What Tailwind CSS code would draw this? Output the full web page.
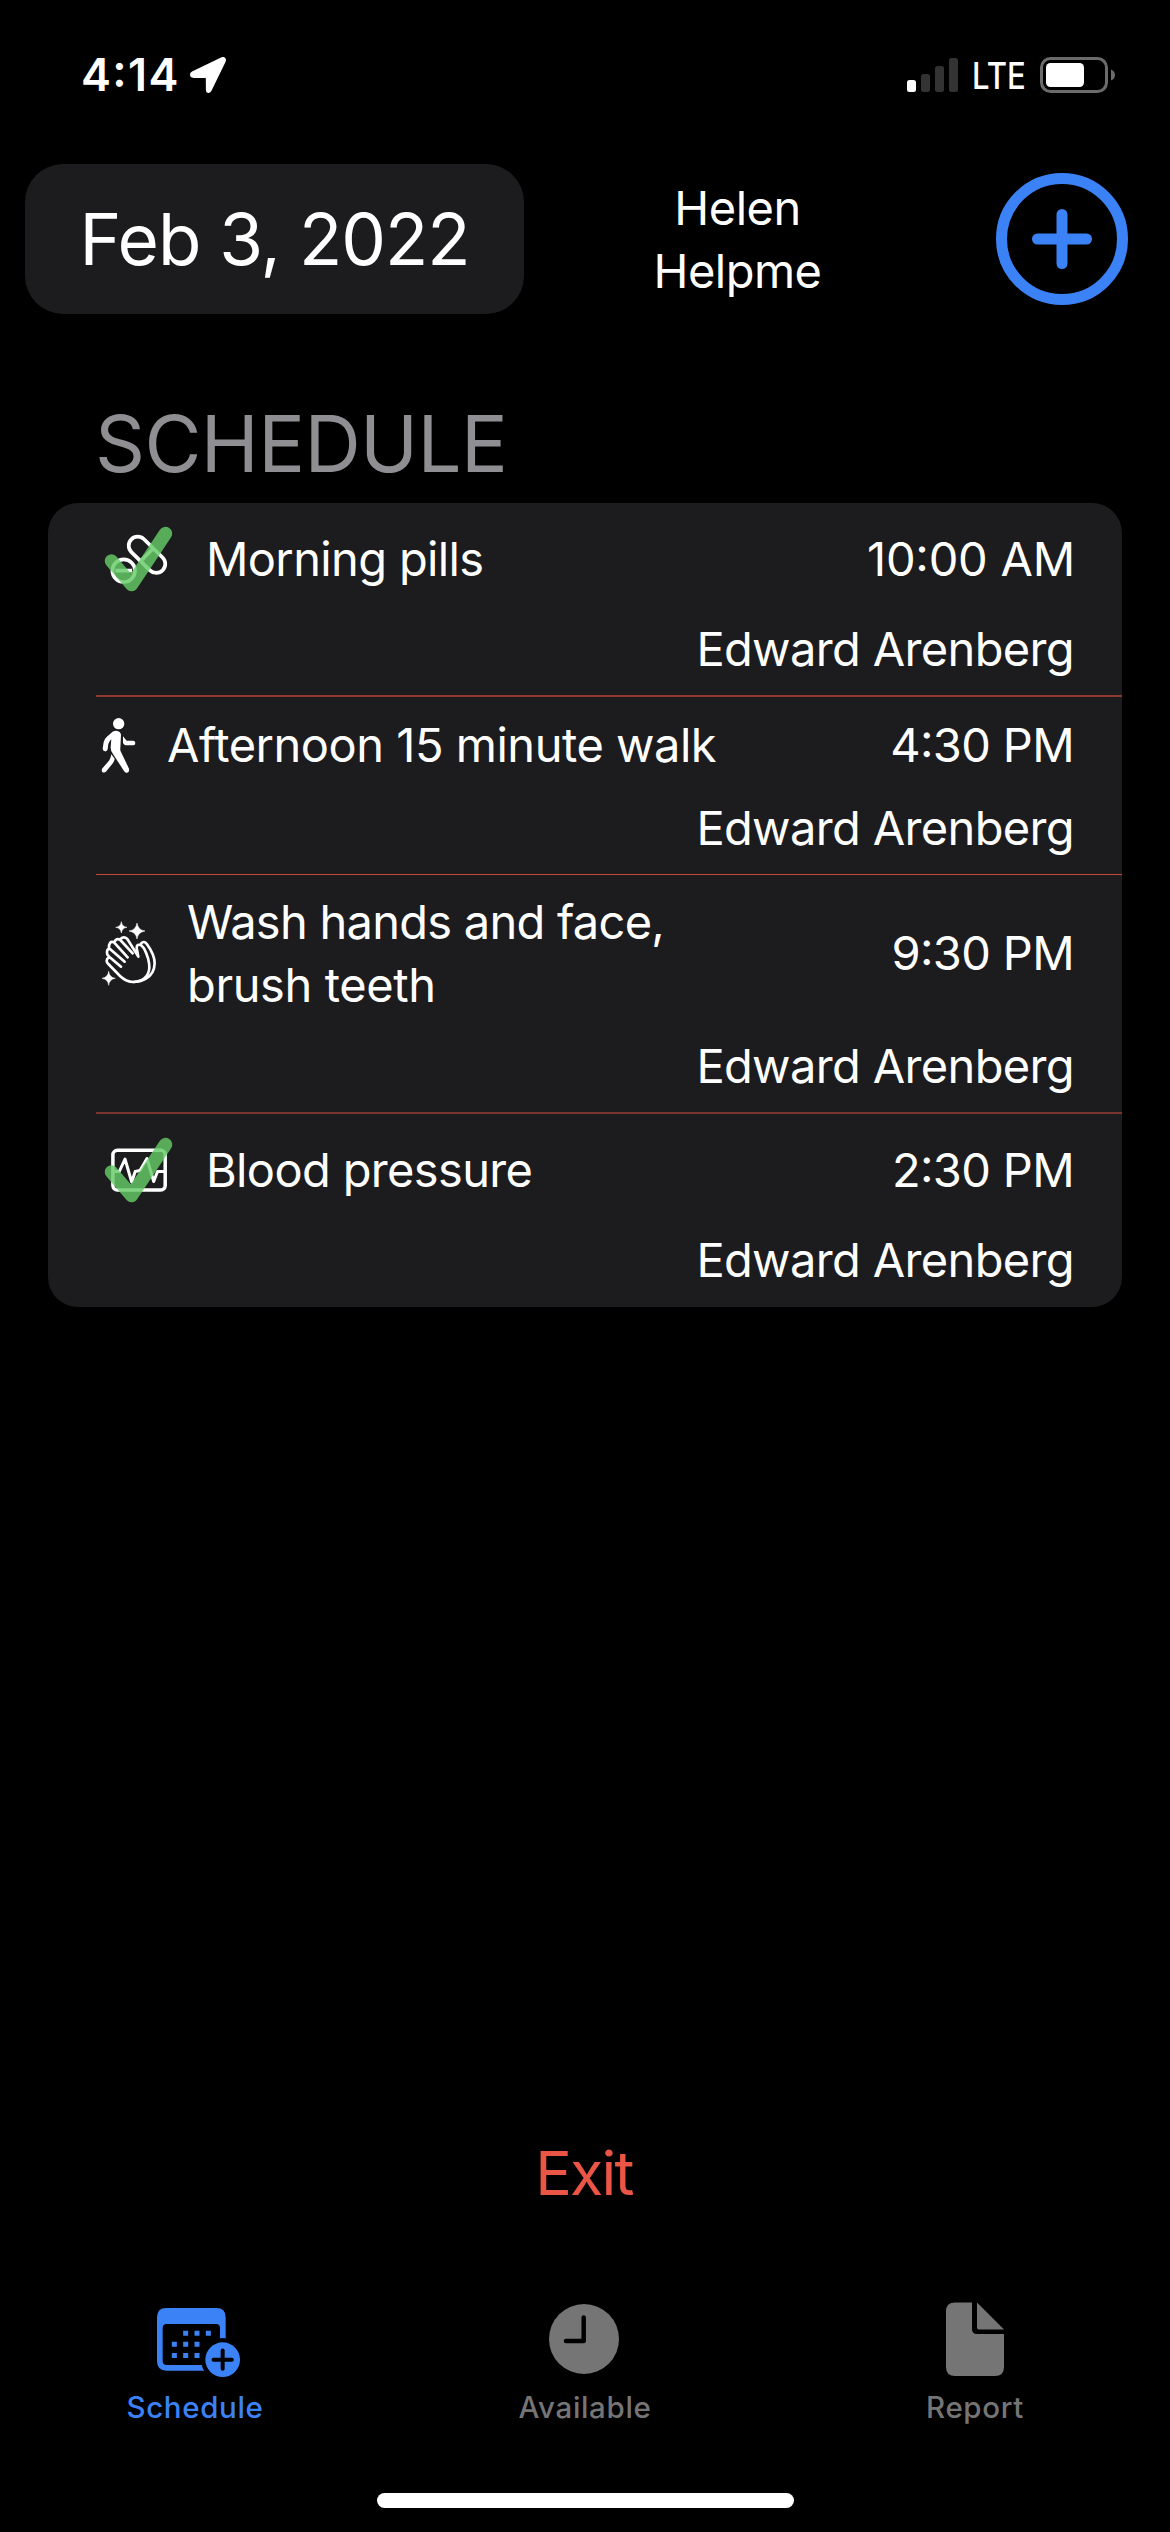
<!DOCTYPE html>
<html lang="en">
<head>
<meta charset="utf-8">
<title>Schedule</title>
<script src="https://cdn.jsdelivr.net/npm/@tailwindcss/browser@4"></script>
</head>
<body class="bg-black text-white font-['Inter',sans-serif] [font-feature-settings:'calt','case'_0]">
<div class="w-[1170px] h-[2532px] flex flex-col overflow-hidden bg-black">

  <!-- Status bar -->
  <div class="h-[149px] flex items-center justify-between pl-[81px] pr-[55px]">
    <div class="flex items-center">
      <span class="w-[109px] text-[45px] leading-none font-semibold tracking-[1.38px]">4:14</span>
      <svg class="w-[36px] h-[36px]" viewBox="0 0 36 36" fill="#fff"><path d="M31.6.3 2 14.400Q0 15.500 0 17.500 0 20.700 3.600 20.900L15.800 21 15.900 33Q16 36 18.500 36 20.600 36 21.600 33.600L35.600 4.800Q36.600 2 35 .7 33.600-.5 31.600.3Z"/></svg>
    </div>
    <div class="flex items-center">
      <svg class="w-[51px] h-[34px]" viewBox="0 0 51 34">
        <rect x="0" y="22" width="9" height="12" rx="2.500" fill="#fff"/>
        <rect x="14" y="16" width="9" height="18" rx="2.500" fill="#333"/>
        <rect x="28" y="8" width="9" height="26" rx="2.500" fill="#333"/>
        <rect x="42" y="0" width="9" height="34" rx="2.500" fill="#333"/>
      </svg>
      <span class="ml-[14px] w-[54px] mr-[14px] text-[37px] leading-[40px] font-medium whitespace-nowrap origin-left scale-x-[0.84] mt-[3px]">LTE</span>
      <svg class="w-[75px] h-[36px]" viewBox="0 0 75 36">
        <rect x="1.500" y="1.500" width="65" height="33" rx="9" fill="none" stroke="#6b6b6b" stroke-width="3"/>
        <rect x="6" y="6" width="38" height="24" rx="4.500" fill="#fff"/>
        <path d="M71 12.500Q75 14 75 18T71 23.500Z" fill="#6b6b6b"/>
      </svg>
    </div>
  </div>

  <!-- Header -->
  <div class="mt-[15px] h-[150px] flex items-center pl-[25px]">
    <button class="w-[499px] h-[150px] rounded-[38px] bg-[#1c1c1e] text-[71px] leading-none tracking-[-1.03px] whitespace-nowrap">Feb 3, 2022</button>
    <div class="w-[427px] text-center text-[47px] leading-[63px] tracking-[-0.5px]">Helen<br>Helpme</div>
    <svg class="ml-[45px] w-[132px] h-[132px]" viewBox="0 0 132 132" fill="none" stroke="#3c82f7" stroke-width="11" stroke-linecap="round">
      <circle cx="66" cy="66" r="60.500"/>
      <path d="M66 41.500V90.500M41.500 66H90.500" />
    </svg>
  </div>

  <h2 class="mt-[85px] ml-[95px] text-[78px] leading-[90px] tracking-[-0.62px] text-[#8e8e93]">SCHEDULE</h2>

  <!-- Schedule list -->
  <div class="mt-[14px] mx-[48px] h-[804px] pl-[48px] rounded-[30px] bg-[#1c1c1e] overflow-hidden text-[47px] leading-[62px] tracking-[-0.64px] whitespace-nowrap">

    <div class="h-[194px] pt-[25px] pr-[48px] border-b-2 border-[#8e382f] flex flex-col gap-[28px]">
      <div class="h-[62px] flex items-center">
        <svg class="w-[110px] h-[62px] overflow-visible" viewBox="96 528 110 62" fill="none">
          <g stroke="#fff" stroke-width="3.700">
            <rect x="-22" y="-9" width="44" height="18" rx="9" transform="translate(147 554.800) rotate(44.500)"/>
            <path d="M140.500 561.200 153.400 548.300"/>
            <circle cx="123.700" cy="570.700" r="11.300"/>
            <path d="M115.500 570.700H132"/>
          </g>
          <path d="M111.500 561 131.500 584.500 165.500 533.500" stroke="#64ca67" stroke-opacity=".82" stroke-width="13.500" stroke-linecap="round" stroke-linejoin="round"/>
        </svg>
        <span class="flex-1">Morning pills</span><span class="tracking-[-0.22px] -mr-[1px]">10:00 AM</span>
      </div>
      <div class="text-right">Edward Arenberg</div>
    </div>

    <div class="h-[178px] pt-[17px] pr-[48px] border-b border-[#c8473b] flex flex-col gap-[21px]">
      <div class="h-[62px] flex items-center">
        <svg class="w-[71px] h-[62px] overflow-visible" viewBox="48 42 213 186" fill="#fff">
          <circle cx="116" cy="71" r="17"/>
          <path d="M91 101Q98 92 108 92 122 93 123 104L121 145Q120 151 123 156L147 206Q149 215 142 218 135 220 132 213L99 162Q91 152 92 140L94 118Q87 124 85 132L83 148Q81 155 75 154 68 153 68 146L71 126Q73 118 79 112Z"/>
          <path d="M94 163 104 176Q103 184 99 189L79 214Q73 220 67 216 63 210 68 204L88 181Q91 177 94 163Z"/>
          <path d="M129 109 140 122H160Q166 123 166 129 166 136 160 136H139Q134 136 131 132L129 128Z"/>
        </svg>
        <span class="flex-1 tracking-[-0.48px]">Afternoon 15 minute walk</span><span>4:30 PM</span>
      </div>
      <div class="text-right">Edward Arenberg</div>
    </div>

    <div class="h-[239px] pt-[15px] pr-[48px] border-b-2 border-[#7a342e] flex flex-col gap-[19px]">
      <div class="h-[126px] flex items-center">
        <svg class="w-[91px] h-[126px] overflow-visible" viewBox="48 -30 273 378" fill="none">
          <g fill="#fff" stroke="#fff" stroke-width="1.500">
            <path d="M124 65Q126 80 141 82 126 84 124 99 122 84 107 82 122 80 124 65Z"/>
            <path d="M171 69Q174 90 195 93 174 96 171 117 168 96 147 93 168 90 171 69Z"/>
            <path d="M86 214Q88 232 106 235 88 238 86 256 84 238 66 235 84 232 86 214Z"/>
          </g>
          <g stroke="#fff" stroke-width="8" stroke-linecap="round" stroke-linejoin="round">
            <path d="M123 200 92 174Q82 171 80 182 80 187 85 192L120 228Q139 246 160 246 205 242 208 204 209 178 192 145L184 136Q170 130 170 144L175 170 142 117Q131 107 122 117M134 185 90 147Q78 145 82 164L90 173M143 172 102 127Q86 121 87 145M158 160 121 120Q109 112 103 127"/>
            <path d="M183 131Q192 120 201 133 224 165 224 190 223 222 198 236 181 246 160 246"/>
          </g>
        </svg>
        <span class="flex-1 leading-[63px]"><span class="tracking-[-0.74px]">Wash hands and face,</span><br><span class="tracking-[-0.4px]">brush teeth</span></span><span>9:30 PM</span>
      </div>
      <div class="text-right">Edward Arenberg</div>
    </div>

    <div class="pt-[25px] pr-[48px] flex flex-col gap-[28px]">
      <div class="h-[62px] flex items-center">
        <svg class="w-[110px] h-[62px] overflow-visible" viewBox="96 1139 110 62" fill="none">
          <g stroke="#fff" stroke-width="3.500" stroke-linejoin="round">
            <rect x="112.900" y="1150.300" width="52.300" height="39.700" rx="4.500"/>
            <path stroke-width="3" d="M113 1171.500H119.300L125 1159 131.700 1182 135.200 1171.500 140 1170.500 147 1158.500 153.700 1181.500 157.500 1171.500H165"/>
          </g>
          <path d="M111.500 1172 131.500 1195.500 165.500 1144.500" stroke="#64ca67" stroke-opacity=".82" stroke-width="13.500" stroke-linecap="round" stroke-linejoin="round"/>
        </svg>
        <span class="flex-1">Blood pressure</span><span>2:30 PM</span>
      </div>
      <div class="text-right">Edward Arenberg</div>
    </div>
  </div>

  <!-- Footer -->
  <div class="mt-auto h-[80px] pr-[2px] flex items-center justify-center text-[61px] leading-none tracking-[-1.8px] text-[#eb5545]">Exit</div>

  <div class="mt-[87px] h-[125px] grid grid-cols-3 text-[29.5px] leading-[37px] font-medium tracking-[0.65px] text-[#757575]">
    <div class="flex flex-col items-center gap-[11px] text-[#3c82f7]">
      <svg class="w-[390px] h-[78px]" viewBox="-300 60 1170 234" fill="#3c82f7">
        <path fill-rule="evenodd" d="M199 84H349Q377 84 377 112V244Q377 272 349 272H199Q171 272 171 244V112Q171 84 199 84ZM200 132Q188 132 188 144V243Q188 255 200 255H348Q360 255 360 243V144Q360 132 348 132Z"/>
        <path d="M249.500 152.500h15v15h-15zM283.500 152.500h15v15h-15zM317.500 152.500h15v15h-15zM215.500 185.500h15v15h-15zM249.500 185.500h15v15h-15zM283.500 185.500h15v15h-15zM215.500 219h15v15h-15zM249.500 219h15v15h-15zM283.500 219h15v15h-15z"/>
        <circle cx="368" cy="239" r="65" fill="#000"/>
        <circle cx="368" cy="239" r="52"/>
        <path d="M368 211.500V266.500M340.500 239H395.500" stroke="#000" stroke-width="12" stroke-linecap="round"/>
      </svg>
      <span>Schedule</span>
    </div>
    <div class="flex flex-col items-center gap-[11px]">
      <svg class="w-[390px] h-[78px]" viewBox="390 2300 390 78">
        <circle cx="584" cy="2339" r="35" fill="#757575"/>
        <path d="M583.700 2317.500V2341H566" fill="none" stroke="#000" stroke-width="4.500" stroke-linecap="round" stroke-linejoin="round"/>
      </svg>
      <span>Available</span>
    </div>
    <div class="flex flex-col items-center gap-[11px]">
      <svg class="w-[390px] h-[78px]" viewBox="780 2300 390 78" fill="#757575">
        <path d="M955 2302.500H972V2329Q972 2334 977 2334H1004V2367Q1004 2376 995 2376H955Q946 2376 946 2367V2311.500Q946 2302.500 955 2302.500Z"/>
        <path d="M977 2302.500 1004 2329.500H979Q977 2329.500 977 2327.500Z"/>
      </svg>
      <span>Report</span>
    </div>
  </div>

  <div class="mt-[68px] mb-[24px] mx-auto w-[417px] h-[15px] shrink-0 rounded-full bg-white"></div>
</div>
</body>
</html>
